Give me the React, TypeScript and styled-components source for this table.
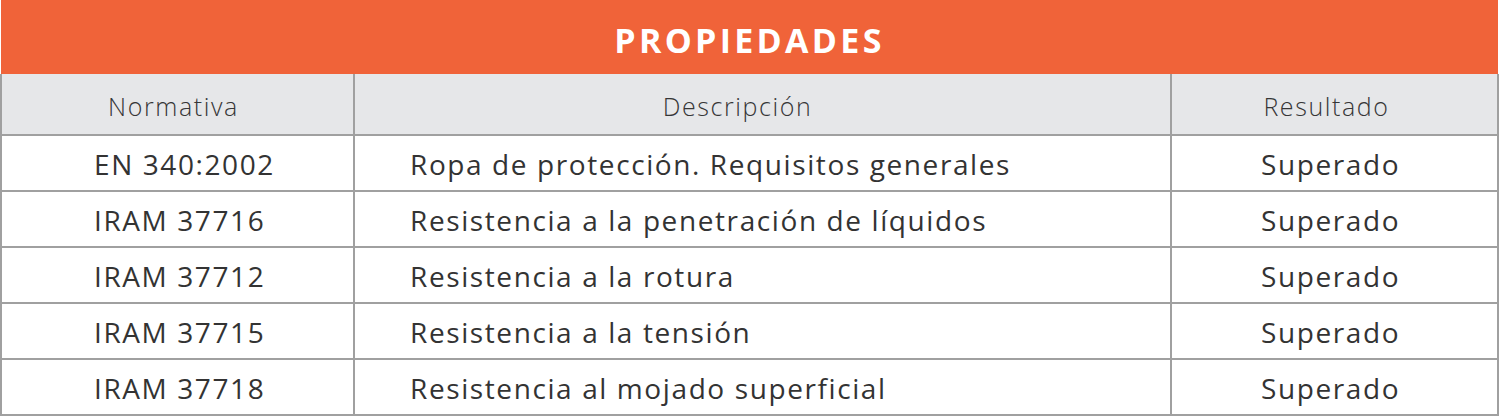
import React from "react";
import styled, { createGlobalStyle } from "styled-components";

const Global = createGlobalStyle`
  html, body { margin: 0; padding: 0; background: #ffffff; }
  body { font-family: "Open Sans", "Liberation Sans", sans-serif; }
`;

const LINE = "#a0a0a0";

const Table = styled.table`
  width: 1499px;
  border-collapse: collapse;
  table-layout: fixed;
  font-family: "Open Sans", "Liberation Sans", sans-serif;
`;

const TitleCell = styled.th`
  height: 74px;
  padding: 6px 0 0 0;
  box-sizing: border-box;
  background: #f06339;
  color: #ffffff;
  font-size: 34px;
  font-weight: 700;
  letter-spacing: 3.3px;
  text-align: center;
  border: none;
`;

const HeadCell = styled.th<{ $shift?: number }>`
  height: 61px;
  box-sizing: border-box;
  padding: 4px ${(p) => (p.$shift ?? 0) * 2}px 0 0;
  background: #e6e7e9;
  color: #363637;
  font-size: 25px;
  font-weight: 300;
  letter-spacing: 1.6px;
  text-align: center;
  border: 2px solid ${LINE};
  border-top: none;
`;

const Cell = styled.td<{ $align?: "left" | "center"; $padL?: number; $padR?: number }>`
  height: 56px;
  box-sizing: border-box;
  padding: 2px ${(p) => p.$padR ?? 0}px 0 ${(p) => p.$padL ?? 0}px;
  color: #333333;
  font-size: 28px;
  font-weight: 400;
  letter-spacing: 1.6px;
  text-align: ${(p) => p.$align ?? "left"};
  border: 2px solid ${LINE};
  white-space: nowrap;
`;

const rows = [
  ["EN 340:2002", "Ropa de protección. Requisitos generales", "Superado"],
  ["IRAM 37716", "Resistencia a la penetración de líquidos", "Superado"],
  ["IRAM 37712", "Resistencia a la rotura", "Superado"],
  ["IRAM 37715", "Resistencia a la tensión", "Superado"],
  ["IRAM 37718", "Resistencia al mojado superficial", "Superado"],
];

export default function App() {
  return (
    <>
      <Global />
      <Table>
        <colgroup>
          <col style={{ width: 353 }} />
          <col style={{ width: 817 }} />
          <col />
        </colgroup>
        <thead>
          <tr>
            <TitleCell colSpan={3}>PROPIEDADES</TitleCell>
          </tr>
          <tr>
            <HeadCell $shift={4}>Normativa</HeadCell>
            <HeadCell $shift={25}>Descripción</HeadCell>
            <HeadCell $shift={8}>Resultado</HeadCell>
          </tr>
        </thead>
        <tbody>
          {rows.map((r) => (
            <tr key={r[0]}>
              <Cell $padL={92}>{r[0]}</Cell>
              <Cell $padL={55}>{r[1]}</Cell>
              <Cell $align="center" $padR={8}>{r[2]}</Cell>
            </tr>
          ))}
        </tbody>
      </Table>
    </>
  );
}
